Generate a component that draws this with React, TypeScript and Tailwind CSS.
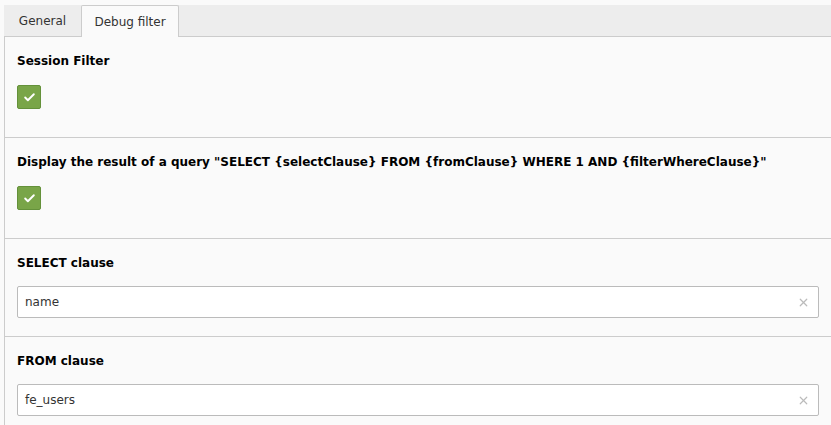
import { Check, X } from "lucide-react";

function CheckboxField({ label }: { label: string }) {
  return (
    <div className="border-b border-[#cccccc] pt-[15px] pb-[28px] px-[12px]">
      <div className="font-bold text-[#000] h-[18px] leading-[18px]">{label}</div>
      <div className="mt-[15px] w-[24px] h-[24px] rounded-[2px] bg-[#79a548] border border-[#64913a] flex items-center justify-center">
        <Check size={13} strokeWidth={3.5} className="text-white" />
      </div>
    </div>
  );
}

function TextField({ label, value, last }: { label: string; value: string; last?: boolean }) {
  return (
    <div className={`pt-[15px] px-[12px] ${last ? "pb-[12px]" : "pb-[18px] border-b border-[#cccccc]"}`}>
      <div className="font-bold text-[#000] h-[18px] leading-[18px]">{label}</div>
      <div className="mt-[14px] h-[32px] bg-white border border-[#bbbbbb] rounded-[2px] flex items-center pl-[7px] pr-[8px]">
        <span className="flex-1 text-[#333]">{value}</span>
        <X size={13} strokeWidth={2.2} className="text-[#bbbbbb]" />
      </div>
    </div>
  );
}

export default function App() {
  return (
    <div
      className="w-[831px] h-[425px] overflow-hidden bg-[#fafafa] pt-[5px] pl-[4px] text-[12px]"
      style={{ fontFamily: '"DejaVu Sans", Verdana, sans-serif' }}
    >
      {/* Tabs */}
      <div className="flex h-[32px] bg-[#ededed] border-b border-[#cccccc]">
        <div className="w-[77px] flex items-center justify-center text-[#333] leading-none">General</div>
        <div className="w-[98px] -mb-px h-[32px] bg-[#fafafa] border border-b-0 border-[#cccccc] rounded-t-[2px] flex items-center justify-center text-[#333] leading-none">
          Debug filter
        </div>
      </div>

      {/* Panel */}
      <div className="border-l border-[#cccccc]">
        <CheckboxField label="Session Filter" />
        <CheckboxField label='Display the result of a query "SELECT {selectClause} FROM {fromClause} WHERE 1 AND {filterWhereClause}"' />
        <TextField label="SELECT clause" value="name" />
        <TextField label="FROM clause" value="fe_users" last />
      </div>
    </div>
  );
}
